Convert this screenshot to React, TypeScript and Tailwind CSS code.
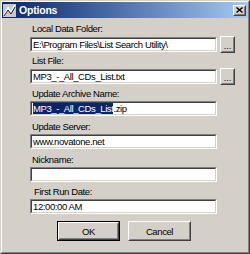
import React from "react";

const font = "font-['Liberation_Sans',Arial,sans-serif] text-[9.5px] tracking-[-0.4px] leading-[11px]";

function Field({ children }: { children?: React.ReactNode }) {
  return (
    <div className="w-[187px] h-[15px] border border-t-[#808080] border-l-[#808080] border-b-white border-r-white bg-white">
      <div className="h-full border border-t-[#404040] border-l-[#404040] border-b-[#d4d0c8] border-r-[#d4d0c8] flex items-center pl-[1px] overflow-hidden whitespace-nowrap text-black">
        {children}
      </div>
    </div>
  );
}

function Raised({ className, children }: { className?: string; children?: React.ReactNode }) {
  return (
    <div className={`border border-t-white border-l-white border-b-[#404040] border-r-[#404040] bg-[#d4d0c8] ${className ?? ""}`}>
      <div className="w-full h-full border border-t-[#d4d0c8] border-l-[#d4d0c8] border-b-[#808080] border-r-[#808080] flex items-center justify-center text-black">
        {children}
      </div>
    </div>
  );
}

function Label({ children, className }: { children: React.ReactNode; className?: string }) {
  return <div className={`h-[11px] text-black pl-[2px] ${className ?? ""}`}>{children}</div>;
}

export default function App() {
  return (
    <div className={`w-[250px] h-[254px] bg-[#d4d0c8] border border-t-[#d4d0c8] border-l-[#d4d0c8] border-b-[#404040] border-r-[#404040] ${font}`}>
      <div className="w-full h-full border border-t-white border-l-white border-b-[#808080] border-r-[#808080] flex flex-col">
        {/* title bar */}
        <div className="h-[16px] bg-linear-to-r from-[#0a246a] to-[#a6caf0] flex items-center pl-[1px] pr-[2px]">
          <svg width="13" height="13" viewBox="0 0 13 13" className="shrink-0">
            <rect x="0" y="0" width="13" height="13" fill="#c8c8c8" />
            <path d="M1 11 L5 4 L8 8 L12 1" stroke="#ffffff" strokeWidth="1.6" fill="none" />
            <path d="M1 12 L5 6 L8 10 L12 3" stroke="#202020" strokeWidth="1" fill="none" />
          </svg>
          <span className="ml-[3px] text-white font-bold text-[10.5px] tracking-[-0.2px]">Options</span>
          <div className="flex-1" />
          <Raised className="w-[13px] h-[11px]">
            <svg width="7" height="6" viewBox="0 0 7 6">
              <path d="M0.5 0.5 L6.5 5.5 M6.5 0.5 L0.5 5.5" stroke="#000" strokeWidth="1.4" />
            </svg>
          </Raised>
        </div>

        <div className="pl-[28px] flex flex-col">
          <Label className="mt-[5px]">Local Data Folder:</Label>
          <div className="mt-[2px] flex items-center">
            <Field>E:\Program Files\List Search Utility\</Field>
            <Raised className="ml-[3px] w-[15px] h-[17px]">
              <span className="text-[9px] leading-none mt-[3px] tracking-[0px]">...</span>
            </Raised>
          </div>

          <Label className="mt-[2px]">List File:</Label>
          <div className="mt-[2px] flex items-center">
            <Field>MP3_-_All_CDs_List.txt</Field>
            <Raised className="ml-[3px] w-[15px] h-[17px]">
              <span className="text-[9px] leading-none mt-[3px] tracking-[0px]">...</span>
            </Raised>
          </div>

          <Label className="mt-[3px]">Update Archive Name:</Label>
          <div className="mt-[2px]">
            <Field>
              <span className="bg-[#0a246a] text-white h-[11px] flex items-center">MP3_-_All_CDs_List</span>
              <span>.zip</span>
            </Field>
          </div>

          <Label className="mt-[5px]">Update Server:</Label>
          <div className="mt-[2px]">
            <Field>www.novatone.net</Field>
          </div>

          <Label className="mt-[5px]">Nickname:</Label>
          <div className="mt-[2px]">
            <Field />
          </div>

          <Label className="mt-[4px] pl-[4px]">First Run Date:</Label>
          <div className="mt-[2px]">
            <Field>12:00:00 AM</Field>
          </div>

          <div className="mt-[7px] flex pl-[27px] gap-[8px]">
            <div className="border border-black">
              <Raised className="w-[61px] h-[18px]">OK</Raised>
            </div>
            <Raised className="w-[63px] h-[20px]">Cancel</Raised>
          </div>
        </div>
      </div>
    </div>
  );
}
